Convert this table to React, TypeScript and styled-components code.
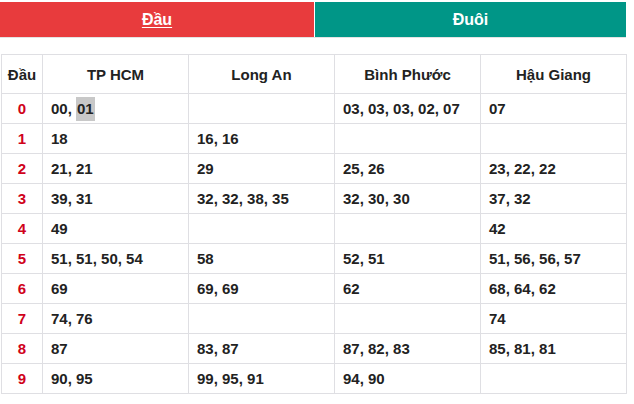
import React from "react";
import styled, { createGlobalStyle } from "styled-components";

const Global = createGlobalStyle`
  html, body { margin: 0; padding: 0; background: #fff; }
  body { font-family: "Liberation Sans", Arial, sans-serif; }
`;

const Page = styled.div`
  width: 626px;
  padding-top: 2px;
`;

const TabBar = styled.div`
  display: grid;
  grid-template-columns: 314px 1fr;
  gap: 1px;
  border-bottom: 1px solid #e3e3e3;
`;

const Tab = styled.div<{ $active?: boolean }>`
  height: 35px;
  display: flex;
  align-items: center;
  justify-content: center;
  background: ${(p) => (p.$active ? "#e83b3d" : "#009687")};
  color: #fff;
  font-weight: bold;
  font-size: 16px;
  text-decoration: ${(p) => (p.$active ? "underline" : "none")};
  text-underline-offset: 2px;
`;

const Table = styled.table`
  margin: 16px 0 0 1px;
  width: 625px;
  table-layout: fixed;
  border-collapse: collapse;
  font-size: 15px;
  font-weight: bold;
  color: #222;
`;

const HeadCell = styled.th`
  height: 38px;
  border: 1px solid #dfdfe3;
  text-align: center;
  font-weight: bold;
  padding: 0;
`;

const NumCell = styled.td`
  height: 29px;
  border: 1px solid #dfdfe3;
  text-align: center;
  color: #d0021b;
  padding: 0;
  line-height: 17px;
`;

const Cell = styled.td`
  height: 29px;
  border: 1px solid #dfdfe3;
  text-align: left;
  padding: 0 0 0 8px;
  white-space: nowrap;
  line-height: 17px;
`;

const Mark = styled.span`
  display: inline-block;
  vertical-align: baseline;
  background: #c8c8c8;
  line-height: 24px;
  padding: 0 1px;
  margin-top: -4px;
  margin-bottom: -4px;
`;

const heads = ["TP HCM", "Long An", "Bình Phước", "Hậu Giang"];

const rows: string[][] = [
  ["00, 01", "", "03, 03, 03, 02, 07", "07"],
  ["18", "16, 16", "", ""],
  ["21, 21", "29", "25, 26", "23, 22, 22"],
  ["39, 31", "32, 32, 38, 35", "32, 30, 30", "37, 32"],
  ["49", "", "", "42"],
  ["51, 51, 50, 54", "58", "52, 51", "51, 56, 56, 57"],
  ["69", "69, 69", "62", "68, 64, 62"],
  ["74, 76", "", "", "74"],
  ["87", "83, 87", "87, 82, 83", "85, 81, 81"],
  ["90, 95", "99, 95, 91", "94, 90", ""],
];

export default function App() {
  return (
    <Page>
      <Global />
      <TabBar>
        <Tab $active>Đầu</Tab>
        <Tab>Đuôi</Tab>
      </TabBar>
      <Table>
        <colgroup>
          <col style={{ width: 41 }} />
          <col style={{ width: 146 }} />
          <col style={{ width: 146 }} />
          <col style={{ width: 146 }} />
          <col style={{ width: 146 }} />
        </colgroup>
        <thead>
          <tr>
            <HeadCell>Đầu</HeadCell>
            {heads.map((h) => (
              <HeadCell key={h}>{h}</HeadCell>
            ))}
          </tr>
        </thead>
        <tbody>
          {rows.map((r, i) => (
            <tr key={i}>
              <NumCell>{i}</NumCell>
              {r.map((c, j) => (
                <Cell key={j}>
                  {i === 0 && j === 0 ? (
                    <>
                      00, <Mark>01</Mark>
                    </>
                  ) : (
                    c
                  )}
                </Cell>
              ))}
            </tr>
          ))}
        </tbody>
      </Table>
    </Page>
  );
}
